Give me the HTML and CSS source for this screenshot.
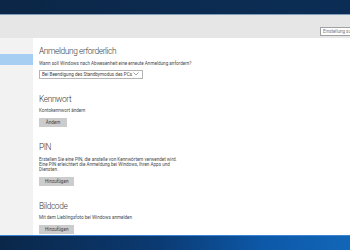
FILE: index.html
```html
<!DOCTYPE html>
<html lang="de">
<head>
    <meta charset="UTF-8">
    <title>Einstellungen - Anmeldeoptionen</title>
    <link rel="stylesheet" href="styles.css">
</head>
<body>
    <div class="wallpaper-top"></div>

    <div class="window">
        <div class="header">
            <div class="search">Einstellung suchen</div>
        </div>

        <div class="main">
            <div class="sidebar">
                <div class="nav-item selected"></div>
            </div>

            <div class="content">
                <div class="section">
                    <h2>Anmeldung erforderlich</h2>
                    <p>Wann soll Windows nach Abwesenheit eine erneute Anmeldung anfordern?</p>
                    <div class="select">
                        <span>Bei Beendigung des Standbymodus des PCs</span>
                        <svg class="chevron" width="6" height="4" viewBox="0 0 6 4">
                            <path d="M0.5 0.5 L3 3 L5.5 0.5" fill="none" stroke="#666" stroke-width="0.6"/>
                        </svg>
                    </div>
                </div>

                <div class="section">
                    <h2>Kennwort</h2>
                    <p>Kontokennwort ändern</p>
                    <button class="btn">Ändern</button>
                </div>

                <div class="section">
                    <h2>PIN</h2>
                    <p class="wrap">Erstellen Sie eine PIN, die anstelle von Kennwörtern verwendet wird. Eine PIN erleichtert die Anmeldung bei Windows, Ihren Apps und Diensten.</p>
                    <button class="btn">Hinzufügen</button>
                </div>

                <div class="section">
                    <h2>Bildcode</h2>
                    <p>Mit dem Lieblingsfoto bei Windows anmelden</p>
                    <button class="btn">Hinzufügen</button>
                </div>
            </div>
        </div>
    </div>

    <div class="wallpaper-bottom"></div>
</body>
</html>
```

FILE: styles.css
```css
body {
    margin: 0;
    width: 350px;
    height: 250px;
    overflow: hidden;
    font-family: 'Roboto', 'Noto Sans', sans-serif;
    color: #333;
    display: flex;
    flex-direction: column;
}
.wallpaper-top {
    height: 14px;
    flex-shrink: 0;
    background: linear-gradient(90deg, #0b2646 0%, #0c2b50 50%, #0b2d55 100%);
    border-bottom: 1px solid #7f9cb8;
}
.window {
    height: 220px;
    flex-shrink: 0;
    display: flex;
    flex-direction: column;
    background-color: #fff;
    overflow: hidden;
}
.header {
    height: 23px;
    flex-shrink: 0;
    background-color: #e6e6e6;
    display: flex;
    justify-content: flex-end;
    align-items: flex-start;
}
.search {
    margin-top: 12px;
    width: 34px;
    height: 7px;
    margin-right: -8px;
    background-color: #fff;
    border: 1px solid #a0a0a0;
    font-size: 4.5px;
    line-height: 7px;
    color: #777;
    padding-left: 2px;
    white-space: nowrap;
    overflow: hidden;
}
.main {
    flex: 1;
    display: flex;
}
.sidebar {
    width: 33px;
    flex-shrink: 0;
    background-color: #f2f2f2;
    padding-top: 16px;
}
.nav-item {
    height: 11px;
}
.nav-item.selected {
    background-color: #a6cef2;
}
.content {
    flex: 1;
    padding: 8px 0 0 6px;
}
.section {
    margin-bottom: 15px;
}
h2 {
    margin: 0;
    font-weight: 300;
    font-size: 8.4px;
    line-height: 11px;
    color: #3a3a3a;
    letter-spacing: -0.4px;
}
p {
    margin: 3.5px 0 0 0;
    font-size: 4.6px;
    line-height: 5px;
    color: #4a4a4a;
}
.wrap {
    width: 140px;
}
.select {
    margin-top: 4px;
    width: 97px;
    height: 7px;
    border: 1px solid #b4b4b4;
    display: flex;
    align-items: center;
    justify-content: space-between;
    padding: 0 3px 0 2px;
    font-size: 4.6px;
    color: #444;
}
.btn {
    display: block;
    margin-top: 5px;
    padding: 0 6px;
    min-width: 28px;
    height: 9px;
    border: none;
    background-color: #cccccc;
    font-family: 'Roboto', 'Noto Sans', sans-serif;
    font-size: 4.6px;
    color: #444;
}
.wallpaper-bottom {
    flex: 1;
    border-top: 1px solid #3b84d2;
    background: linear-gradient(90deg, #0a2749 0%, #0b3a72 45%, #0d58a8 75%, #1266b8 100%);
}
```
